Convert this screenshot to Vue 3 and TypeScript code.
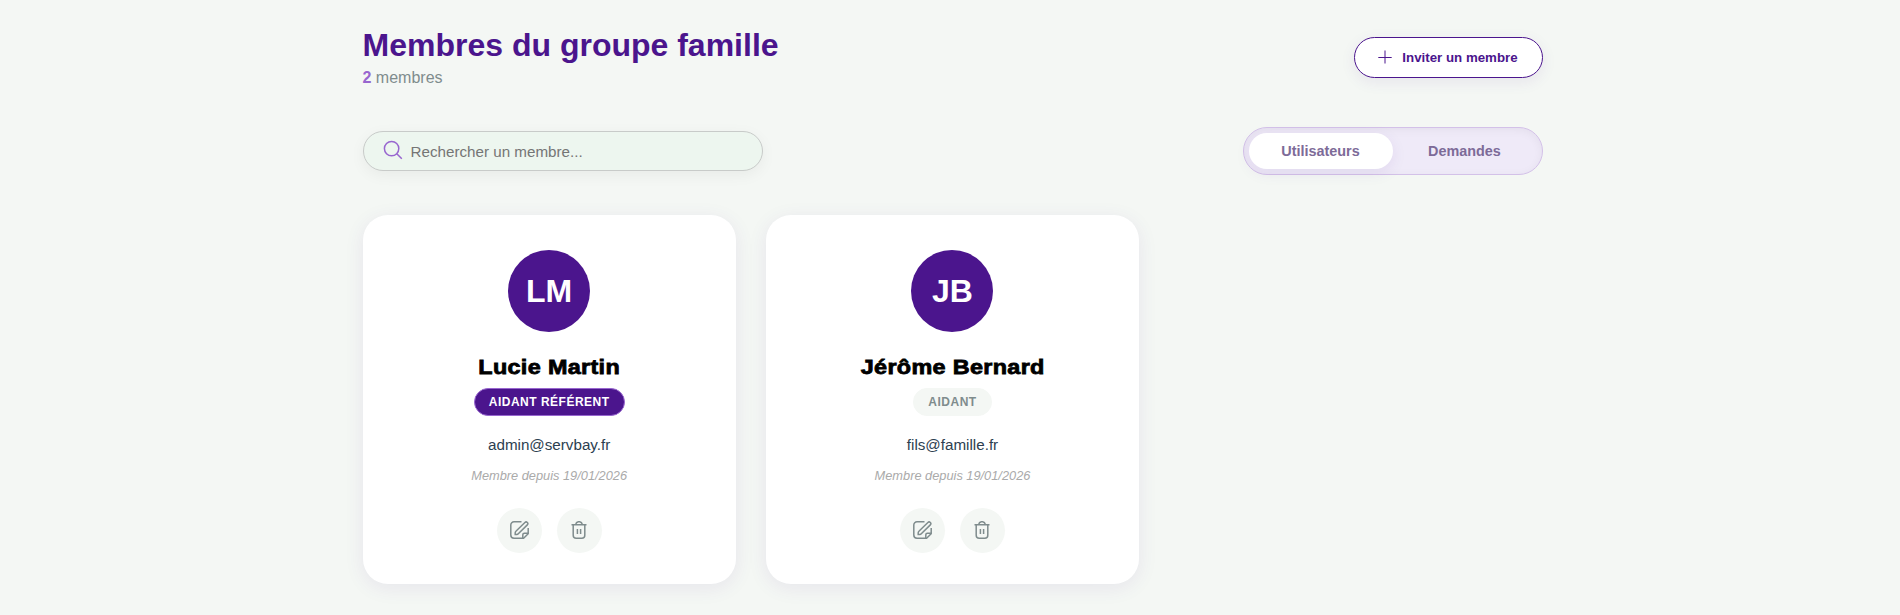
<script setup lang="ts">
import { ref } from 'vue'

interface Member {
  initials: string
  name: string
  role: string
  referent: boolean
  email: string
  since: string
}

const members: Member[] = [
  { initials: 'LM', name: 'Lucie Martin', role: 'Aidant référent', referent: true, email: 'admin@servbay.fr', since: '19/01/2026' },
  { initials: 'JB', name: 'Jérôme Bernard', role: 'Aidant', referent: false, email: 'fils@famille.fr', since: '19/01/2026' },
]
const tabs = ['Utilisateurs', 'Demandes']
const active = ref(0)
const search = ref('')
</script>

<template>
  <main class="page">
    <header class="head">
      <div>
        <h1>Membres du groupe famille</h1>
        <p class="count"><strong>{{ members.length }}</strong> membres</p>
      </div>
      <button class="invite" type="button">
        <svg width="14" height="14" viewBox="0 0 14 14"><path d="M7 .5v13M.3 7.500h13.4" /></svg>
        <span>Inviter un membre</span>
      </button>
    </header>

    <div class="toolbar">
      <label class="search">
        <svg width="20" height="20" viewBox="0 0 20 20"><circle cx="8.6" cy="8.6" r="7.2" /><path d="M13.8 13.800l5 5" /></svg>
        <input v-model="search" type="text" placeholder="Rechercher un membre..." />
      </label>
      <div class="tabs">
        <button
          v-for="(tab, i) in tabs"
          :key="tab"
          type="button"
          class="tab"
          :class="{ on: active === i }"
          @click="active = i"
        >{{ tab }}</button>
      </div>
    </div>

    <section class="grid">
      <article v-for="m in members" :key="m.email" class="card">
        <div class="avatar">{{ m.initials }}</div>
        <h2>{{ m.name }}</h2>
        <span class="role" :class="{ referent: m.referent }">{{ m.role }}</span>
        <p class="email">{{ m.email }}</p>
        <p class="since">Membre depuis {{ m.since }}</p>
        <div class="actions">
          <button type="button" aria-label="Modifier">
            <svg width="19" height="18" viewBox="0 0 19 18">
              <path d="M11.5.8H4A3.2 3.2 0 0 0 .8 4v10A3.2 3.2 0 0 0 4 17.2h9.6L18.2 12.800V7" />
              <path d="M12.800 17V13.800a1.600 1.600 0 0 1 1.600-1.600h3.800" />
              <path d="M14.900 1.500a1.650 1.650 0 0 1 2.400 2.400L8.300 12.700a2.200 2.200 0 0 1-1.500.7H5.200v-1.600a2.200 2.200 0 0 1 .7-1.500z" />
            </svg>
          </button>
          <button type="button" aria-label="Supprimer">
            <svg width="16" height="18" viewBox="0 0 16 18">
              <path d="M.5 3.700h15M4.700 3.400A3.200 3.200 0 0 1 7.300.8h1.400a3.200 3.200 0 0 1 2.600 2.600M2.200 3.800v10.400a3 3 0 0 0 3 3h5.600a3 3 0 0 0 3-3V3.800M6.400 8v5M9.600 8v5" />
            </svg>
          </button>
        </div>
      </article>
    </section>
  </main>
</template>

<style>
body {
  background: #f4f7f4;
}
</style>

<style scoped>
* {
  box-sizing: border-box;
  margin: 0;
}
.page {
  width: 1180px;
  margin-left: 362.5px;
  padding-top: 26px;
  min-height: 615px;
  font-family: 'Liberation Sans', Arial, sans-serif;
}
button,
input {
  font-family: inherit;
  border: 0;
  padding: 0;
}
svg {
  display: block;
  fill: none;
  stroke: currentColor;
  flex: none;
}
.head {
  display: flex;
  justify-content: space-between;
  height: 101px;
}
h1 {
  font-size: 32px;
  line-height: 38px;
  color: #4b158d;
}
.count {
  font-size: 16px;
  line-height: 27px;
  color: #7f8c8d;
}
.count strong {
  color: #9866cf;
}
.invite {
  display: flex;
  align-items: center;
  justify-content: center;
  gap: 10px;
  width: 189px;
  height: 41px;
  margin-top: 11px;
  border: 1px solid #4b158d;
  border-radius: 21px;
  background: #fff;
  color: #4b158d;
  font-size: 13.3px;
  font-weight: 700;
  box-shadow: 0 4px 15px rgba(75, 21, 141, 0.08);
}
.invite svg {
  margin-top: -2px;
}
.toolbar {
  display: flex;
  align-items: center;
  justify-content: space-between;
  height: 48px;
  margin-bottom: 40px;
}
.search {
  display: flex;
  align-items: center;
  gap: 8px;
  width: 400px;
  height: 40px;
  padding: 0 19px;
  border: 1px solid #c8cbc9;
  border-radius: 20px;
  background: #edf6ef;
  box-shadow: 0 4px 15px rgba(0, 0, 0, 0.05);
}
.search svg {
  color: #9866cf;
  stroke-width: 1.500;
  margin-top: -2px;
}
.search input {
  flex: 1;
  min-width: 0;
  background: transparent;
  outline: 0;
  font-size: 15.200px;
  color: #2c3e50;
}
.search input::placeholder {
  color: #757575;
}
.tabs {
  display: flex;
  width: 300px;
  height: 48px;
  padding: 5px;
  border: 1px solid #d3c1e8;
  border-radius: 24px;
  background: #efeaf8;
  box-shadow: inset 0 2px 10px rgba(0, 0, 0, 0.05);
}
.tab {
  flex: 1;
  border-radius: 18px;
  background: transparent;
  color: #7d6b98;
  font-size: 14.400px;
  font-weight: 700;
}
.tab.on {
  background: #fff;
  box-shadow: 0 4px 15px rgba(75, 21, 141, 0.08);
}
.grid {
  display: grid;
  grid-template-columns: repeat(3, 1fr);
  gap: 30px;
}
.card {
  display: flex;
  flex-direction: column;
  align-items: center;
  height: 369px;
  padding-top: 35px;
  border-radius: 25px;
  background: #fff;
  box-shadow: 0 4px 20px rgba(75, 21, 141, 0.08);
}
.avatar {
  width: 82px;
  height: 82px;
  border-radius: 50%;
  background: #4b158d;
  color: #fff;
  font-size: 32px;
  font-weight: 700;
  line-height: 82px;
  text-align: center;
}
h2 {
  margin-top: 20px;
  font-size: 20.500px;
  font-weight: 700;
  line-height: 30px;
  letter-spacing: 0.3px;
  color: #000;
  -webkit-text-stroke: 0.8px #000;
  transform: scaleX(1.14);
}
.role {
  height: 28px;
  margin-top: 6px;
  padding: 0 14px;
  border: 1px solid #f4f7f4;
  border-radius: 14px;
  background: #f4f7f4;
  color: #7f8c8d;
  font-size: 12px;
  font-weight: 700;
  line-height: 26px;
  letter-spacing: 0.5px;
  text-transform: uppercase;
}
.role.referent {
  border-color: #9866cf;
  background: #4b158d;
  color: #fff;
}
.email {
  margin-top: 19px;
  font-size: 15.200px;
  line-height: 20px;
  color: #2c3e50;
}
.since {
  margin-top: 11px;
  font-size: 12.800px;
  font-style: italic;
  line-height: 20px;
  color: #aaa;
}
.actions {
  display: flex;
  gap: 15px;
  margin-top: 22px;
}
.actions button {
  display: flex;
  align-items: center;
  justify-content: center;
  width: 45px;
  height: 45px;
  border-radius: 50%;
  background: #f4f7f4;
  color: #7f8c8d;
}
.actions svg {
  stroke-width: 1.500;
  margin-top: -1px;
}
</style>
